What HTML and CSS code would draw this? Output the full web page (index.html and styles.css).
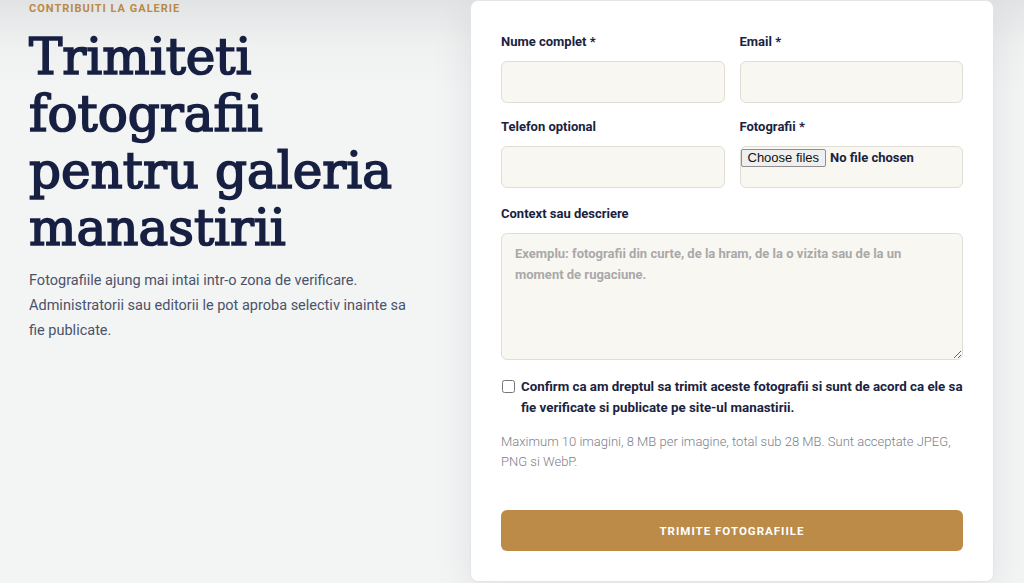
FILE: index.html
```html
<!DOCTYPE html>
<html lang="ro">
<head>
    <meta charset="UTF-8">
    <meta name="viewport" content="width=device-width, initial-scale=1.0">
    <title>Contribuiti la galerie</title>
    <link rel="stylesheet" href="styles.css">
</head>
<body>
    <div class="page">
        <div class="intro">
            <div class="eyebrow">Contribuiti la galerie</div>
            <h1>Trimiteti fotografii pentru galeria manastirii</h1>
            <p class="lead">Fotografiile ajung mai intai intr-o zona de verificare. Administratorii sau editorii le pot aproba selectiv inainte sa fie publicate.</p>
        </div>

        <form class="card" onsubmit="return false;">
            <div class="grid">
                <div class="field">
                    <label for="name">Nume complet *</label>
                    <input type="text" id="name" class="input">
                </div>
                <div class="field">
                    <label for="email">Email *</label>
                    <input type="email" id="email" class="input">
                </div>
                <div class="field">
                    <label for="phone">Telefon optional</label>
                    <input type="tel" id="phone" class="input">
                </div>
                <div class="field">
                    <label for="photos">Fotografii *</label>
                    <div class="input file-box">
                        <input type="file" id="photos" class="file-native" multiple>
                        <label for="photos" class="file-btn">Choose files</label>
                        <span class="file-name">No file chosen</span>
                    </div>
                </div>
            </div>

            <div class="field">
                <label for="context">Context sau descriere</label>
                <textarea id="context" class="input textarea" placeholder="Exemplu: fotografii din curte, de la hram, de la o vizita sau de la un moment de rugaciune."></textarea>
            </div>

            <label class="consent">
                <input type="checkbox">
                <span>Confirm ca am dreptul sa trimit aceste fotografii si sunt de acord ca ele sa fie verificate si publicate pe site-ul manastirii.</span>
            </label>

            <p class="hint">Maximum 10 imagini, 8 MB per imagine, total sub 28 MB. Sunt acceptate JPEG, PNG si WebP.</p>

            <button type="submit" class="btn-submit">Trimite fotografiile</button>
        </form>
    </div>
</body>
</html>
```

FILE: styles.css
```css
* {
    margin: 0;
    padding: 0;
    box-sizing: border-box;
}

body {
    font-family: 'Roboto', 'Liberation Sans', sans-serif;
    background: linear-gradient(180deg, #e2e3e4 0px, #eff0f0 45px, #f3f4f4 90px);
    color: #1a2340;
    height: 100vh;
    overflow: hidden;
}

.page {
    display: grid;
    grid-template-columns: 400px 524px;
    column-gap: 41px;
    padding: 0 30px 0 29px;
}

/* Left column */
.eyebrow {
    font-size: 11px;
    font-weight: 700;
    letter-spacing: 1px;
    text-transform: uppercase;
    color: #b98a45;
    margin-top: 2px;
    line-height: 13px;
}

.intro h1 {
    font-family: 'DejaVu Serif', 'Liberation Serif', serif;
    font-size: 50px;
    font-weight: 400;
    -webkit-text-stroke: 1.7px #172042;
    line-height: 57px;
    color: #172042;
    margin-top: 14px;
}

.lead {
    max-width: 388px;
    font-size: 14.5px;
    line-height: 25px;
    color: #4a536b;
    margin-top: 11px;
}

/* Form card */
.card {
    background: #fff;
    border: 1px solid #e3e4e6;
    border-radius: 8px;
    box-shadow: 0 10px 40px rgba(20, 30, 50, 0.08);
    padding: 33px 30px 30px 30px;
    height: 582px;
}

.grid {
    display: grid;
    grid-template-columns: 1fr 1fr;
    column-gap: 15px;
    row-gap: 16px;
    margin-bottom: 18px;
}

.field > label {
    display: block;
    font-size: 13px;
    font-weight: 700;
    line-height: 16px;
    margin-bottom: 11px;
}

.input {
    display: block;
    width: 100%;
    height: 42px;
    background: #f9f7f1;
    border: 1px solid #e0ddd5;
    border-radius: 6px;
    font-family: inherit;
    font-size: 13px;
    color: #1a2340;
}

.file-box {
    display: flex;
    align-items: flex-start;
    gap: 4px;
    padding-top: 2px;
}

.file-native {
    display: none;
}

.file-btn {
    font-family: 'Liberation Sans', sans-serif;
    font-size: 13px;
    line-height: 16px;
    padding: 0 6px;
    background: #efefef;
    border: 1px solid #8f8f8f;
    border-radius: 2px;
    color: #111;
    cursor: pointer;
}

.file-name {
    font-size: 13px;
    font-weight: 700;
    line-height: 18px;
}

.textarea {
    height: 127px;
    padding: 9px 13px;
    font-weight: 700;
    line-height: 21px;
    resize: vertical;
}

.textarea::placeholder {
    color: #a9a9a9;
}

.consent {
    display: flex;
    gap: 6px;
    margin-top: 16px;
    font-size: 13.3px;
    font-weight: 700;
    line-height: 21px;
}

.consent input {
    width: 13px;
    height: 13px;
    margin: 4px 0 0 1px;
    flex-shrink: 0;
}

.hint {
    margin-top: 14px;
    font-size: 13px;
    font-weight: 300;
    line-height: 20px;
    color: #7d808a;
}

.btn-submit {
    display: block;
    width: 100%;
    height: 41px;
    margin-top: 38px;
    background: #bb8b47;
    border: none;
    border-radius: 6px;
    color: #fff;
    font-family: inherit;
    font-size: 11.5px;
    font-weight: 700;
    letter-spacing: 1px;
    text-transform: uppercase;
    cursor: pointer;
}
```
